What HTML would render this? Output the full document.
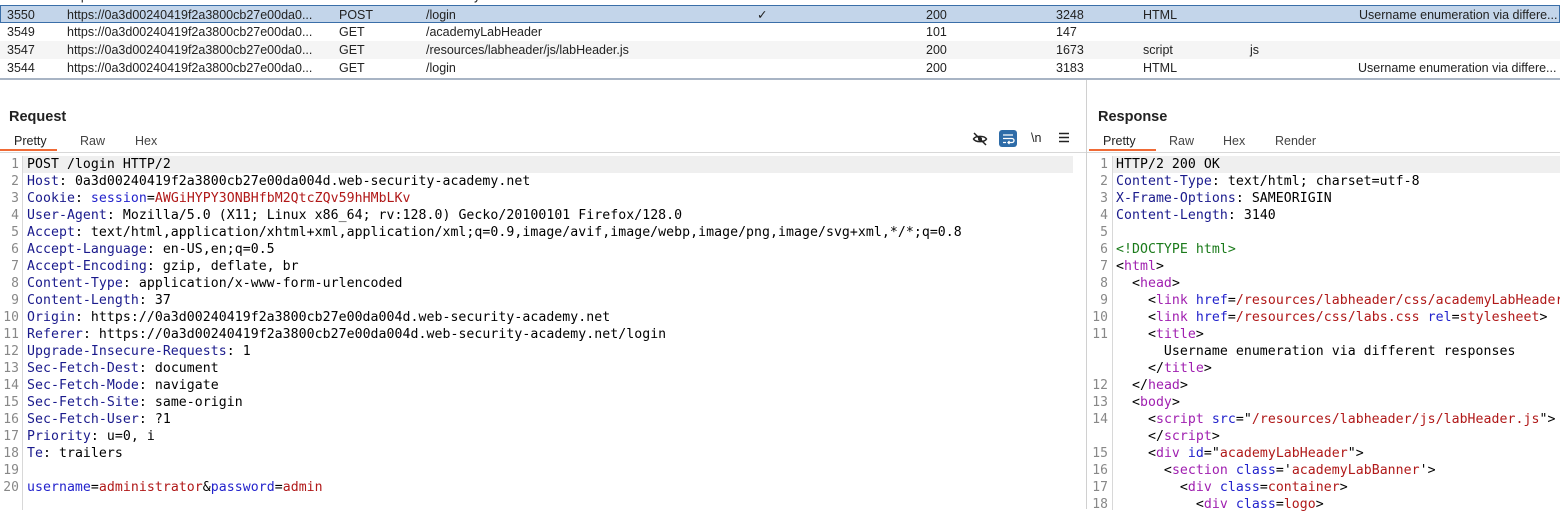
<!DOCTYPE html><html><head><style>
*{margin:0;padding:0;box-sizing:border-box}
body{width:1560px;height:509px;overflow:hidden;background:#fff;position:relative;font-family:"Liberation Sans",sans-serif}
.row{position:absolute;left:0;width:1560px;height:18px;font-family:"Liberation Sans Narrow","Liberation Sans",sans-serif;font-size:12.5px;color:#222;line-height:18px}
.row span{position:absolute;white-space:nowrap}
.mono{font-family:"DejaVu Sans Mono","Liberation Mono",monospace;font-size:13.2px;letter-spacing:0.05px}
.ln{position:absolute;height:17px;line-height:17px;white-space:pre}
.num{position:absolute;height:17px;line-height:17px;color:#888;text-align:right;font-family:"DejaVu Sans Mono",monospace;font-size:13px}
.h{color:#1a1a8c}.k{color:#2222cc}.v{color:#b01818}.t{color:#a020b0}.g{color:#1a7a1a}
.tab{position:absolute;top:134px;font-size:12.5px;color:#444}
</style></head><body>
<div class="row" style="top:-13px"><span style="left:7px">3551</span><span style="left:67px">https://0a3d00240419f2a3800cb27e00da0...</span><span style="left:339px">GET</span><span style="left:426px">/academyLabHeader</span><span style="left:926px">101</span><span style="left:1056px">147</span></div>
<div class="row" style="top:5px;background:#c3d5ea;border:1px solid #3a6ea8"><span style="left:6px">3550</span><span style="left:66px">https://0a3d00240419f2a3800cb27e00da0...</span><span style="left:338px">POST</span><span style="left:425px">/login</span><span style="left:756px">✓</span><span style="left:925px">200</span><span style="left:1055px">3248</span><span style="left:1142px">HTML</span><span style="left:1358px">Username enumeration via differe...</span></div>
<div class="row" style="top:23px"><span style="left:7px">3549</span><span style="left:67px">https://0a3d00240419f2a3800cb27e00da0...</span><span style="left:339px">GET</span><span style="left:426px">/academyLabHeader</span><span style="left:926px">101</span><span style="left:1056px">147</span></div>
<div class="row" style="top:41px;background:#f5f5f5"><span style="left:7px">3547</span><span style="left:67px">https://0a3d00240419f2a3800cb27e00da0...</span><span style="left:339px">GET</span><span style="left:426px">/resources/labheader/js/labHeader.js</span><span style="left:926px">200</span><span style="left:1056px">1673</span><span style="left:1143px">script</span><span style="left:1250px">js</span></div>
<div class="row" style="top:59px"><span style="left:7px">3544</span><span style="left:67px">https://0a3d00240419f2a3800cb27e00da0...</span><span style="left:339px">GET</span><span style="left:426px">/login</span><span style="left:926px">200</span><span style="left:1056px">3183</span><span style="left:1143px">HTML</span><span style="left:1358px">Username enumeration via differe...</span></div>
<div style="position:absolute;top:78px;left:0;width:1560px;height:2px;background:#a8b4c4"></div>
<div style="position:absolute;top:80px;left:1086px;width:1px;height:429px;background:#d0d0d0"></div>
<div style="position:absolute;top:109px;left:9px;font-weight:bold;font-size:14.5px;color:#222">Request</div>
<div style="position:absolute;top:109px;left:1098px;font-weight:bold;font-size:14.5px;color:#222">Response</div>
<div class="tab" style="left:14px;color:#222">Pretty</div><div class="tab" style="left:80px">Raw</div><div class="tab" style="left:135px">Hex</div>
<div class="tab" style="left:1103px;color:#222">Pretty</div><div class="tab" style="left:1169px">Raw</div><div class="tab" style="left:1223px">Hex</div><div class="tab" style="left:1275px">Render</div>
<div style="position:absolute;top:149px;left:0;width:57px;height:2px;background:#f06a35"></div>
<div style="position:absolute;top:149px;left:1089px;width:67px;height:2px;background:#f06a35"></div>
<div style="position:absolute;top:152px;left:0;width:1086px;height:1px;background:#d8d8d8"></div>
<div style="position:absolute;top:152px;left:1087px;width:473px;height:1px;background:#d8d8d8"></div>
<svg style="position:absolute;left:972px;top:131px" width="16" height="16" viewBox="0 0 16 16"><path d="M1.5 8C3.5 4.5 12.5 4.5 14.5 8C12.5 11.5 3.5 11.5 1.5 8Z" fill="none" stroke="#222" stroke-width="1.5"/><circle cx="8" cy="8" r="2" fill="#222"/><path d="M2 2L14 14" stroke="#222" stroke-width="1.5"/></svg>
<div style="position:absolute;left:999px;top:130px;width:18px;height:17px;background:#2e6ca8;border-radius:3px"></div>
<svg style="position:absolute;left:999px;top:130px" width="18" height="17" viewBox="0 0 18 17"><path d="M4 5H14M4 8.5H13a2 2 0 0 1 0 4H9M10.5 11L9 12.5L10.5 14M4 12.5H7" fill="none" stroke="#fff" stroke-width="1.3"/></svg>
<div style="position:absolute;left:1031px;top:131px;font-size:12.5px;color:#222">\n</div>
<svg style="position:absolute;left:1059px;top:132px" width="10" height="11"><path d="M0 1.5H10M0 5.5H10M0 9.5H10" stroke="#222" stroke-width="1.5"/></svg>
<div style="position:absolute;top:156px;left:22px;width:1px;height:354px;background:#d8d8d8"></div>
<div style="position:absolute;top:156px;left:1112px;width:1px;height:354px;background:#d8d8d8"></div>
<div style="position:absolute;top:156px;left:23px;width:1050px;height:17px;background:#efefef"></div>
<div style="position:absolute;top:156px;left:1113px;width:447px;height:17px;background:#efefef"></div>
<div class="mono" id="req"></div>
<div class="mono" id="res"></div>
<script>
var req=[
'POST /login HTTP/2',
'<span class=h>Host</span>: 0a3d00240419f2a3800cb27e00da004d.web-security-academy.net',
'<span class=h>Cookie</span>: <span class=k>session</span>=<span class=v>AWGiHYPY3ONBHfbM2QtcZQv59hHMbLKv</span>',
'<span class=h>User-Agent</span>: Mozilla/5.0 (X11; Linux x86_64; rv:128.0) Gecko/20100101 Firefox/128.0',
'<span class=h>Accept</span>: text/html,application/xhtml+xml,application/xml;q=0.9,image/avif,image/webp,image/png,image/svg+xml,*/*;q=0.8',
'<span class=h>Accept-Language</span>: en-US,en;q=0.5',
'<span class=h>Accept-Encoding</span>: gzip, deflate, br',
'<span class=h>Content-Type</span>: application/x-www-form-urlencoded',
'<span class=h>Content-Length</span>: 37',
'<span class=h>Origin</span>: https://0a3d00240419f2a3800cb27e00da004d.web-security-academy.net',
'<span class=h>Referer</span>: https://0a3d00240419f2a3800cb27e00da004d.web-security-academy.net/login',
'<span class=h>Upgrade-Insecure-Requests</span>: 1',
'<span class=h>Sec-Fetch-Dest</span>: document',
'<span class=h>Sec-Fetch-Mode</span>: navigate',
'<span class=h>Sec-Fetch-Site</span>: same-origin',
'<span class=h>Sec-Fetch-User</span>: ?1',
'<span class=h>Priority</span>: u=0, i',
'<span class=h>Te</span>: trailers',
'',
'<span class=k>username</span>=<span class=v>administrator</span>&amp;<span class=k>password</span>=<span class=v>admin</span>'];
var h='';
req.forEach(function(l,i){var y=156+17*i;h+='<div class=num style="top:'+y+'px;left:0;width:19px">'+(i+1)+'</div><div class=ln style="top:'+y+'px;left:27px">'+l+'</div>';});
document.getElementById('req').innerHTML=h;
var res=[
[1,'HTTP/2 200 OK'],
[2,'<span class=h>Content-Type</span>: text/html; charset=utf-8'],
[3,'<span class=h>X-Frame-Options</span>: SAMEORIGIN'],
[4,'<span class=h>Content-Length</span>: 3140'],
[5,''],
[6,'<span class=g>&lt;!DOCTYPE html&gt;</span>'],
[7,'&lt;<span class=t>html</span>&gt;'],
[8,'  &lt;<span class=t>head</span>&gt;'],
[9,'    &lt;<span class=t>link</span> <span class=k>href</span>=<span class=v>/resources/labheader/css/academyLabHeader.css</span>'],
[10,'    &lt;<span class=t>link</span> <span class=k>href</span>=<span class=v>/resources/css/labs.css</span> <span class=k>rel</span>=<span class=v>stylesheet</span>&gt;'],
[11,'    &lt;<span class=t>title</span>&gt;'],
[0,'      Username enumeration via different responses'],
[0,'    &lt;/<span class=t>title</span>&gt;'],
[12,'  &lt;/<span class=t>head</span>&gt;'],
[13,'  &lt;<span class=t>body</span>&gt;'],
[14,'    &lt;<span class=t>script</span> <span class=k>src</span>="<span class=v>/resources/labheader/js/labHeader.js</span>"&gt;'],
[0,'    &lt;/<span class=t>script</span>&gt;'],
[15,'    &lt;<span class=t>div</span> <span class=k>id</span>="<span class=v>academyLabHeader</span>"&gt;'],
[16,'      &lt;<span class=t>section</span> <span class=k>class</span>=\'<span class=v>academyLabBanner</span>\'&gt;'],
[17,'        &lt;<span class=t>div</span> <span class=k>class</span>=<span class=v>container</span>&gt;'],
[18,'          &lt;<span class=t>div</span> <span class=k>class</span>=<span class=v>logo</span>&gt;']];
h='';
res.forEach(function(r,i){var y=156+17*i;h+=(r[0]?'<div class=num style="top:'+y+'px;left:1086px;width:22px">'+r[0]+'</div>':'')+'<div class=ln style="top:'+y+'px;left:1116px">'+r[1]+'</div>';});
document.getElementById('res').innerHTML=h;
</script>
</body></html>
